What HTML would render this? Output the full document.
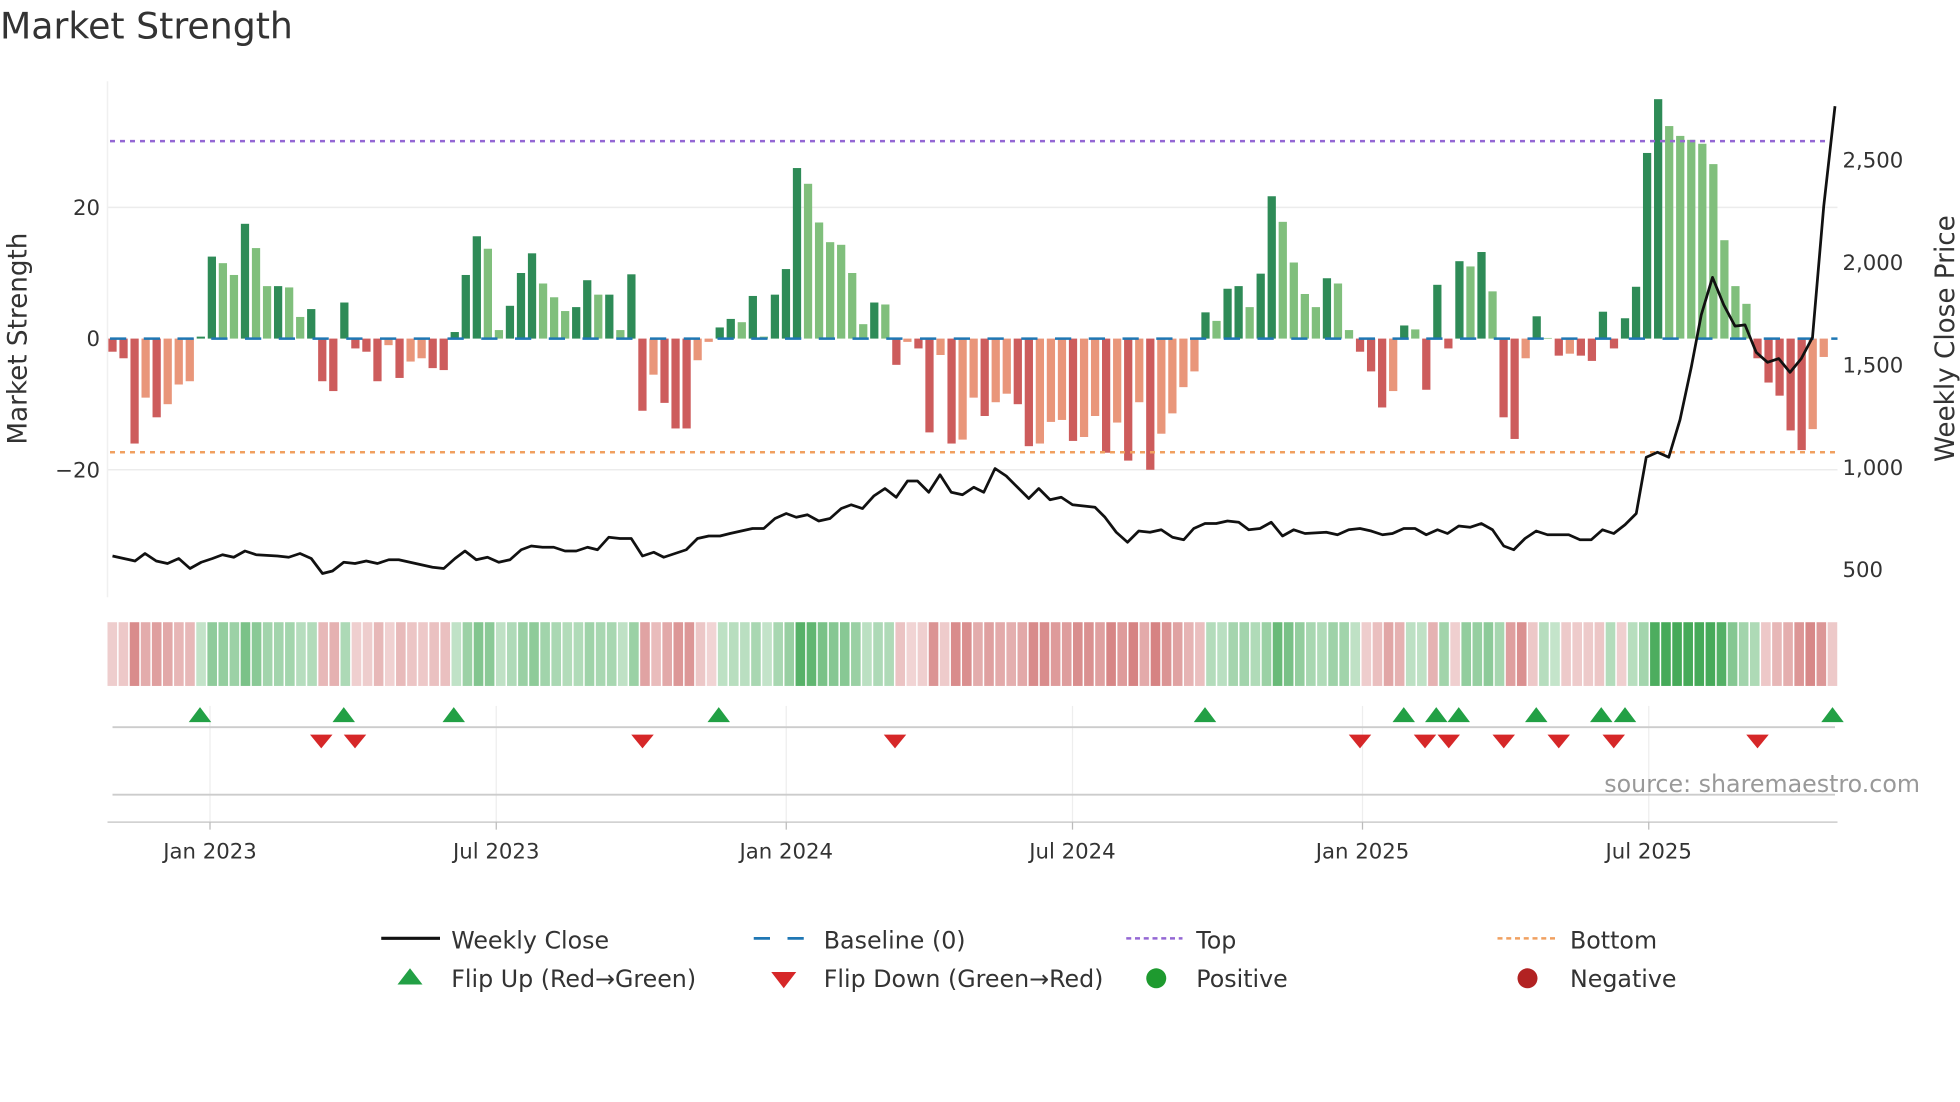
<!DOCTYPE html>
<html><head><meta charset="utf-8"><style>
html,body{margin:0;padding:0;background:#fff;}
svg{display:block;font-family:"DejaVu Sans","Liberation Sans",sans-serif;}
</style></head><body>
<svg id="s" width="1960" height="1102" viewBox="0 0 1568 882" preserveAspectRatio="none" xmlns="http://www.w3.org/2000/svg">
<rect width="1568" height="882" fill="#fff"/>
<text x="0" y="31" font-size="29" fill="#333">Market Strength</text>
<g stroke="#ececec" stroke-width="1.2">
<line x1="86" y1="166" x2="1470" y2="166"/><line x1="86" y1="376" x2="1470" y2="376"/>
<line x1="86" y1="65" x2="86" y2="478" stroke="#f0f0f0"/>
</g>
<g id="bars"></g>
<line x1="88" y1="271" x2="1470" y2="271" stroke="#1f77b4" stroke-width="2" stroke-dasharray="13,14"/>
<line x1="88" y1="113" x2="1462" y2="113" stroke="#9467d4" stroke-width="2" stroke-dasharray="4,4"/>
<line x1="88" y1="362" x2="1470" y2="362" stroke="#f0a060" stroke-width="2" stroke-dasharray="4,4"/>
<polyline id="price" fill="none" stroke="#111" stroke-width="2.2" stroke-linejoin="round"/>
<g font-size="17" fill="#333" text-anchor="end">
<text x="80" y="172">20</text><text x="80" y="277">0</text><text x="80" y="382">−20</text>
</g>
<g font-size="17" fill="#333">
<text x="1474" y="134">2,500</text><text x="1474" y="216">2,000</text><text x="1474" y="298">1,500</text><text x="1474" y="380">1,000</text><text x="1474" y="462">500</text>
</g>
<text transform="translate(21,271) rotate(-90)" font-size="21" fill="#333" text-anchor="middle">Market Strength</text>
<text transform="translate(1563,271) rotate(-90)" font-size="21" fill="#333" text-anchor="middle">Weekly Close Price</text>
<g id="heat"></g>
<g stroke="#eee" stroke-width="1">
<line x1="168" y1="565" x2="168" y2="658"/><line x1="397" y1="565" x2="397" y2="658"/><line x1="629" y1="565" x2="629" y2="658"/><line x1="858" y1="565" x2="858" y2="658"/><line x1="1090" y1="565" x2="1090" y2="658"/><line x1="1319" y1="565" x2="1319" y2="658"/>
</g>
<line x1="90" y1="582" x2="1468" y2="582" stroke="#ccc" stroke-width="1.5"/>
<line x1="90" y1="636" x2="1468" y2="636" stroke="#ccc" stroke-width="1.5"/>
<line x1="86" y1="658" x2="1470" y2="658" stroke="#ccc" stroke-width="1.2"/>
<g id="marks"></g>
<g stroke="#bbb" stroke-width="1">
<line x1="168" y1="658" x2="168" y2="664"/><line x1="397" y1="658" x2="397" y2="664"/><line x1="629" y1="658" x2="629" y2="664"/><line x1="858" y1="658" x2="858" y2="664"/><line x1="1090" y1="658" x2="1090" y2="664"/><line x1="1319" y1="658" x2="1319" y2="664"/>
</g>
<g font-size="17" fill="#333" text-anchor="middle">
<text x="168" y="687">Jan 2023</text><text x="397" y="687">Jul 2023</text><text x="629" y="687">Jan 2024</text><text x="858" y="687">Jul 2024</text><text x="1090" y="687">Jan 2025</text><text x="1319" y="687">Jul 2025</text>
</g>
<text x="1536" y="634" font-size="19" fill="#999" text-anchor="end">source: sharemaestro.com</text>
<g font-size="19" fill="#333">
<line x1="305" y1="751" x2="352" y2="751" stroke="#111" stroke-width="2.5"/><text x="361" y="759">Weekly Close</text>
<line x1="603" y1="751" x2="648" y2="751" stroke="#1f77b4" stroke-width="2.2" stroke-dasharray="13,14"/><text x="659" y="759">Baseline (0)</text>
<line x1="901" y1="751" x2="946" y2="751" stroke="#9467d4" stroke-width="2" stroke-dasharray="4,3"/><text x="957" y="759">Top</text>
<line x1="1198" y1="751" x2="1244" y2="751" stroke="#f0a060" stroke-width="2" stroke-dasharray="4,3"/><text x="1256" y="759">Bottom</text>
<polygon points="328,775 338,788 318,788" fill="#22a045"/><text x="361" y="790">Flip Up (Red→Green)</text>
<polygon points="617,778 637,778 627,791" fill="#d62728"/><text x="659" y="790">Flip Down (Green→Red)</text>
<circle cx="925" cy="783" r="8" fill="#1e9a2f"/><text x="957" y="790">Positive</text>
<circle cx="1222" cy="783" r="8" fill="#b22222"/><text x="1256" y="790">Negative</text>
</g>
</svg>
<script>
var v=[-2,-3,-16,-9,-12,-10,-7,-6.5,0.3,12.5,11.5,9.7,17.5,13.8,8,8,7.8,3.3,4.5,-6.5,-8,5.5,-1.5,-2,-6.5,-1,-6,-3.5,-3,-4.5,-4.8,1,9.7,15.6,13.7,1.3,5,10,13,8.4,6.3,4.2,4.8,8.9,6.7,6.7,1.3,9.8,-11,-5.5,-9.8,-13.7,-13.7,-3.3,-0.5,1.7,3,2.5,6.5,0.3,6.7,10.6,26,23.6,17.7,14.7,14.3,10,2.2,5.5,5.2,-4,-0.5,-1.5,-14.3,-2.5,-16,-15.4,-9,-11.8,-9.7,-8.4,-10,-16.4,-16,-12.7,-12.4,-15.6,-15,-11.8,-17.4,-12.8,-18.6,-9.7,-20,-14.5,-11.4,-7.4,-5,4,2.7,7.6,8,4.8,9.9,21.7,17.8,11.6,6.8,4.8,9.2,8.4,1.3,-2,-5,-10.5,-8,2,1.4,-7.8,8.2,-1.5,11.8,11,13.2,7.2,-12,-15.3,-3,3.4,0.1,-2.6,-2.3,-2.6,-3.4,4.1,-1.5,3.1,7.9,28.3,36.5,32.4,30.9,30.3,29.7,26.6,15,8,5.3,-3,-6.7,-8.7,-14,-17,-13.8,-2.8];
var NS="http://www.w3.org/2000/svg";
function el(p,t,a){var e=document.createElementNS(NS,t);for(var k in a)e.setAttribute(k,a[k]);p.appendChild(e);return e;}
var bars=document.getElementById('bars'),heat=document.getElementById('heat');
var step=(1459-90)/(v.length-1);
var hs=(1471-86)/v.length;
for(var i=0;i<v.length;i++){
 var x=90+i*step, val=v[i], pr=i?v[i-1]:0, c;
 if(val>=0) c=(val>=pr)?'#2e8b57':'#80bf7c'; else c=(val<=pr)?'#cd5c5c':'#e9967a';
 var h=Math.abs(val)*5.25, y=val>=0?271-h:271;
 el(bars,'rect',{x:x-3.3,y:y,width:6.6,height:Math.max(h,0.5),fill:c});
 var t=Math.min(Math.abs(val)/30,1), col;
 if(val>=0){var a=0.3+0.65*t;col='rgba(60,165,80,'+a+')';}
 else{var a=0.25+0.5*Math.min(Math.abs(val)/18,1);col='rgba(200,90,90,'+a+')';}
 el(heat,'rect',{x:86+i*hs,y:498,width:hs-1.2,height:51,fill:col});
}
var P=[[90,445],[99,447],[108,449],[116,443],[125,449],[134,451],[143,447],[152,455],[161,450],[170,447],[178,444],[187,446],[196,441],[205,444],[222,445],[231,446],[240,443],[249,447],[258,459],[266,457],[275,450],[284,451],[293,449],[302,451],[311,448],[319,448],[328,450],[337,452],[346,454],[355,455],[364,447],[372,441],[381,448],[390,446],[399,450],[408,448],[417,440],[425,437],[434,438],[443,438],[452,441],[461,441],[470,438],[478,440],[487,430],[496,431],[505,431],[514,445],[523,442],[531,446],[540,443],[549,440],[558,431],[567,429],[576,429],[584,427],[593,425],[602,423],[611,423],[620,415],[629,411],[637,414],[646,412],[655,417],[664,415],[673,407],[681,404],[690,407],[699,397],[708,391],[717,398],[726,385],[734,385],[743,394],[752,380],[761,394],[770,396],[779,390],[787,394],[796,375],[805,381],[814,390],[823,399],[831,391],[840,400],[849,398],[858,404],[867,405],[876,406],[884,414],[893,426],[902,434],[911,425],[920,426],[929,424],[938,430],[947,432],[955,423],[964,419],[973,419],[982,417],[991,418],[999,424],[1008,423],[1017,418],[1026,429],[1035,424],[1044,427],[1061,426],[1070,428],[1079,424],[1088,423],[1097,425],[1106,428],[1114,427],[1123,423],[1132,423],[1141,428],[1150,424],[1158,427],[1167,421],[1176,422],[1185,419],[1194,424],[1203,437],[1211,440],[1220,431],[1229,425],[1238,428],[1255,428],[1264,432],[1273,432],[1282,424],[1291,427],[1300,420],[1309,411],[1317,366],[1326,362],[1335,366],[1344,336],[1353,294],[1361,252],[1370,222],[1379,244],[1388,261],[1396,260],[1405,282],[1414,290],[1423,287],[1432,298],[1441,287],[1450,270],[1459,165],[1468,85]];
document.getElementById('price').setAttribute('points',P.map(function(p){return p.join(',')}).join(' '));
var m=document.getElementById('marks');
[160,275,363,575,964,1123,1149,1167,1229,1281,1300,1466].forEach(function(x){el(m,'polygon',{points:x+',566 '+(x+9)+',578 '+(x-9)+',578',fill:'#22a045'});});
[257,284,514,716,1088,1140,1159,1203,1247,1291,1406].forEach(function(x){el(m,'polygon',{points:(x-9)+',588 '+(x+9)+',588 '+x+',599',fill:'#d62728'});});
</script>
</body></html>
